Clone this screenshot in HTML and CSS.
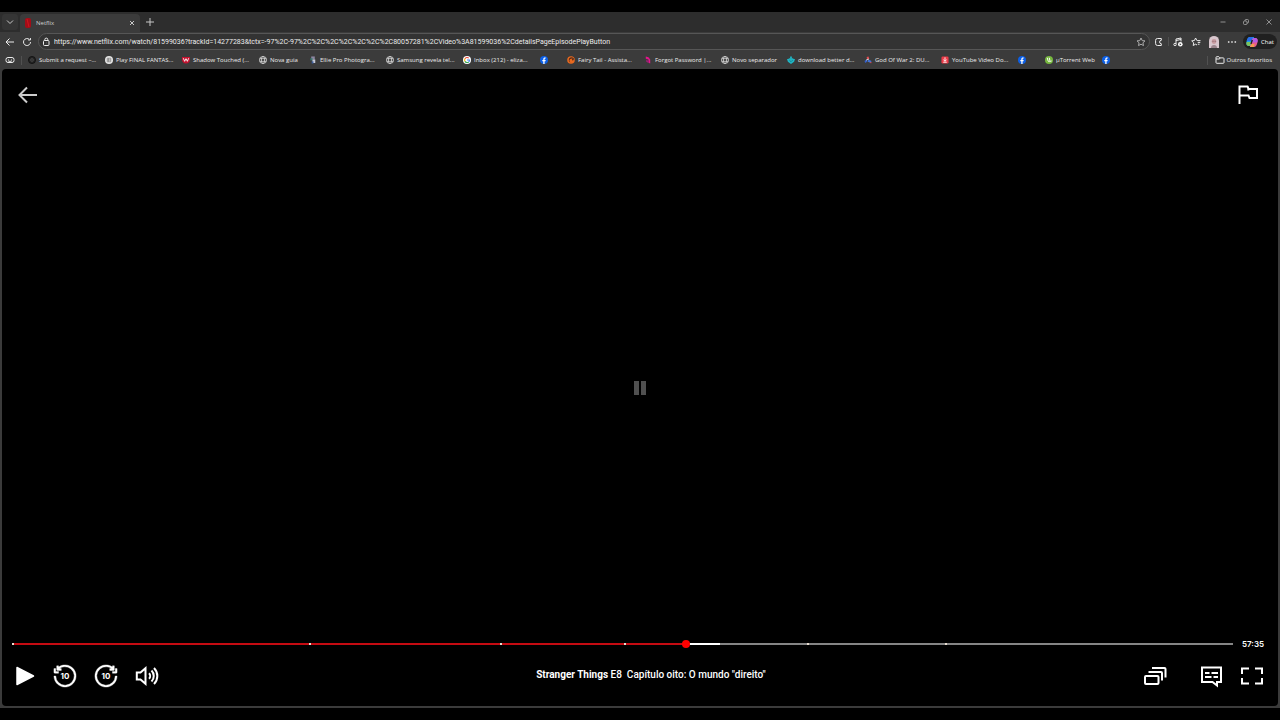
FILE: index.html
```html
<!DOCTYPE html>
<html lang="pt">

<head>
    <meta charset="UTF-8">
    <meta name="viewport" content="width=device-width, initial-scale=1.0">
    <title>Netflix</title>
    <link rel="stylesheet" href="styles.css">
</head>

<body>
    <svg class="sprite" aria-hidden="true">
        <symbol id="globe" viewBox="0 0 18 18">
            <g fill="none" stroke="#dcdcdc" stroke-width="1.7">
                <circle cx="9" cy="9" r="8" />
                <ellipse cx="9" cy="9" rx="3.6" ry="8" />
                <path d="M1.5 6h15M1.5 12h15" />
            </g>
        </symbol>
        <symbol id="facebook" viewBox="0 0 18 18">
            <circle cx="9" cy="9" r="9" fill="#0c5fe6" />
            <path d="M7.4 18v-6.4H5.2V8.8h2.2V7c0-2.4 1.4-3.7 3.5-3.7l2 .2v2.3h-1.1c-1.1 0-1.5.7-1.5 1.4v1.6h2.5l-.4 2.8h-2.1V18z" fill="#fff" />
        </symbol>
        <symbol id="skip" viewBox="-1 -1 26 26">
            <path d="M11 2A10 10 0 1 1 2 12H0a12 12 0 1 0 5-9.750V1H3v4a1 1 0 0 0 1 1h4V4H6a10 10 0 0 1 5-2zM2 4v3h3v2H1a1 1 0 0 1-1-1V4z" fill="#fff" stroke="#fff" stroke-width="0.4" />
        </symbol>
    </svg>

    <div class="browser">
        <header class="tab-strip">
            <button class="tab-menu" aria-label="Tab actions">
                <svg viewBox="0 0 8 8"><path d="M1 2.5l3 3 3-3" /></svg>
            </button>
            <div class="tab">
                <svg class="tab-icon" viewBox="0 0 6 10"><rect width="6" height="10" rx="2" fill="#a30d17" /><path d="M2 1l2 8" stroke="#cf1420" stroke-width="1" /></svg>
                <span class="tab-title">Netflix</span>
                <button class="tab-close" aria-label="Close tab">
                    <svg viewBox="0 0 8 8"><path d="M2 2l4 4M6 2L2 6" /></svg>
                </button>
            </div>
            <button class="tab-new" aria-label="New tab">
                <svg viewBox="0 0 8 8"><path d="M4 0v8M0 4h8" /></svg>
            </button>
            <div class="window-buttons">
                <button aria-label="Minimize"><svg viewBox="0 0 8 8"><path d="M1.5 4h5" /></svg></button>
                <button aria-label="Restore"><svg viewBox="0 0 8 8"><rect x="1.5" y="3" width="3.5" height="3.5" rx="1" /><path d="M3 3V2.500a1 1 0 0 1 1-1h1.500a1 1 0 0 1 1 1V4a1 1 0 0 1-1 1H5" /></svg></button>
                <button aria-label="Close"><svg viewBox="0 0 8 8"><path d="M1.5 1.5l5 5M6.5 1.5l-5 5" /></svg></button>
            </div>
        </header>

        <div class="toolbar">
            <button class="nav-btn" aria-label="Back">
                <svg viewBox="0 0 10 10"><path d="M9 5H1M4.5 1.5L1 5l3.5 3.5" /></svg>
            </button>
            <button class="nav-btn" aria-label="Refresh">
                <svg viewBox="0 0 10 10"><path d="M8.5 5a3.5 3.5 0 1 1-1.200-2.600M8.400 1v2H6.200" /></svg>
            </button>
            <div class="address">
                <svg viewBox="0 0 8 10"><rect x="1.5" y="3.5" width="5.5" height="5" rx="1" /><path d="M2.800 3.5V2.600a1.500 1.500 0 0 1 3 0v.9M4.200 5.800h.2" /></svg>
                <input class="url" type="text" aria-label="Address" value="https://www.netflix.com/watch/81599036?trackId=14277283&amp;tctx=-97%2C-97%2C%2C%2C%2C%2C%2C%2C80057281%2CVideo%3A81599036%2CdetailsPageEpisodePlayButton">
                <button class="favorite" aria-label="Add to favorites">
                    <svg viewBox="0 0 10 10"><path d="M5 1l1.200 2.600 2.800.3-2.100 1.900.6 2.800L5 7.200 2.500 8.600l.6-2.800L1 3.900l2.800-.3z" /></svg>
                </button>
            </div>
            <button class="tool" aria-label="Extensions">
                <svg viewBox="0 0 10 10"><path d="M3.500 1.500h3.800v1.800a1.700 1.700 0 1 0 0 3.400v1.800H3.500A1.900 1.900 0 0 1 1.600 6.600V3.400a1.900 1.900 0 0 1 1.900-1.900z" /></svg>
            </button>
            <span class="divider"></span>
            <button class="tool" aria-label="Media controls">
                <svg viewBox="0 0 10 10"><path d="M3 7V2l5-1v3.500M3 3.500l5-1" /><circle cx="2" cy="7.500" r="1.200" /><circle cx="7.300" cy="7.300" r="2.300" fill="#fff" stroke="none" /><path d="M6.700 6.200v2.200l1.700-1.100z" fill="#333" stroke="none" /></svg>
            </button>
            <button class="tool" aria-label="Favorites">
                <svg viewBox="0 0 10 10"><path d="M6.800 3.500h-.9L4.600 1 3.400 3.500l-2.700.4 2 1.900-.5 2.700 2.400-1.300 1.400.8M7 3.600h2.500M6.700 5.400h2.600M6.800 7.200h1.700" /></svg>
            </button>
            <button class="tool" aria-label="Profile">
                <svg class="avatar" viewBox="0 0 12 12"><path d="M1 12V4.500A5 4.500 0 0 1 11 4.500V12z" fill="#d8c6cd" /><circle cx="6" cy="5.500" r="2.400" fill="#c79a9f" /><path d="M3 12a3 3 0 0 1 6 0z" fill="#9a848c" /><path d="M4.700 5.300h.6M6.800 5.300h.6" stroke="#533b46" /></svg>
            </button>
            <button class="tool" aria-label="Settings and more">
                <svg class="dots" viewBox="0 0 10 10"><circle cx="1.700" cy="5" r="0.900" /><circle cx="5" cy="5" r="0.900" /><circle cx="8.300" cy="5" r="0.900" /></svg>
            </button>
            <button class="chat">
                <svg viewBox="0 0 12 12"><path d="M4 1h4L6 8C5.500 9.500 4.500 10 3 10 0 10 0 7 1 4 1.600 2 2.500 1 4 1z" fill="#1aa3ec" /><path d="M1 4c.6-2 1.500-3 3-3h3L5.500 5H.7z" fill="#2b6bea" /><path d="M.6 6h4.700L4 9.800C1 10.500-.2 8.500.6 6z" fill="#7ec35a" /><path d="M8 11H4l2-7c.5-1.500 1.500-2 3-2 3 0 3 3 2 6-.6 2-1.500 3-3 3z" fill="#e85a8b" /><path d="M7 2h2c3 0 3 2.500 2.300 4.500H5.500z" fill="#b45ae2" /><path d="M5 8h3.500L8 11H4z" fill="#f39a50" /><path d="M6.300 4L5 8" stroke="#202020" stroke-width="1.300" /></svg>
                <span>Chat</span>
            </button>
        </div>

        <nav class="bookmarks" aria-label="Favorites bar">
            <button class="essentials" aria-label="Browser essentials">
                <svg viewBox="0 0 10 8"><rect x="1" y="1.500" width="8" height="5" rx="2" /><path d="M3 4h1M6 4h1M3.500 5.300h3" /></svg>
            </button>
            <span class="divider"></span>
            <a class="bookmark" href="#"><svg viewBox="0 0 18 18"><circle cx="9" cy="9" r="8" fill="#242424" stroke="#111" stroke-width="2" /><circle cx="9" cy="9" r="3" fill="none" stroke="#555" stroke-width="1.500" /></svg><span>Submit a request –...</span></a>
            <a class="bookmark" href="#"><svg viewBox="0 0 18 18"><circle cx="9" cy="9" r="9" fill="#e6e6e6" /><path d="M5 5h8v8H5zM5 9h8M8 5v8" fill="none" stroke="#777" stroke-width="1.500" /></svg><span>Play FINAL FANTAS...</span></a>
            <a class="bookmark" href="#"><svg viewBox="0 0 18 18"><path d="M0 2h18v7c0 4-4 8-9 8s-9-4-9-8z" fill="#c3122f" /><path d="M3 5l3 7 3-6 3 6 3-7" fill="none" stroke="#fff" stroke-width="2" /></svg><span>Shadow Touched (...</span></a>
            <a class="bookmark short" href="#"><svg><use href="#globe" /></svg><span>Nova guia</span></a>
            <a class="bookmark" href="#"><svg viewBox="0 0 18 18"><path d="M5 1h8v7H5z" fill="#8c86a0" /><path d="M3 5h5v5H3z" fill="#3a7770" /><path d="M8 8h6v8H7z" fill="#c7cbd9" /><path d="M6 12h4v5H6z" fill="#3c5c9b" /></svg><span>Ellie Pro Photogra...</span></a>
            <a class="bookmark" href="#"><svg><use href="#globe" /></svg><span>Samsung revela tel...</span></a>
            <a class="bookmark" href="#"><svg viewBox="0 0 18 18"><circle cx="9" cy="9" r="9" fill="#fff" /><g fill="none" stroke-width="2.500"><path d="M4.500 6A5.500 5.500 0 0 1 13 5" stroke="#e94335" /><path d="M4.500 6a5.500 5.500 0 0 0 0 6" stroke="#f9bb05" /><path d="M4.500 12a5.500 5.500 0 0 0 8.500 1" stroke="#34a853" /><path d="M13 13a5 5 0 0 0 1.500-4H9" stroke="#4285f4" /></g></svg><span>Inbox (212) - eliza...</span></a>
            <a class="bookmark icon-only" href="#" aria-label="Facebook"><svg><use href="#facebook" /></svg></a>
            <a class="bookmark" href="#"><svg viewBox="0 0 18 18"><circle cx="9" cy="9" r="8.500" fill="#e96a20" /><path d="M16 9a6 6 0 1 0-6 6 4.500 4.500 0 0 1 0-9c3 0 5 1 6 3z" fill="#5a2e18" /><circle cx="10.500" cy="10" r="4" fill="#e96a20" /><circle cx="13" cy="8" r="2" fill="#5a2e18" /></svg><span>Fairy Tail - Assista...</span></a>
            <a class="bookmark" href="#"><svg viewBox="0 0 18 18"><path d="M4 1l6 2 4 5v9l-4-2V8L4 6z" fill="#e3158b" /><path d="M5 8l5 3v5l-5-3z" fill="#9c1f75" /></svg><span>Forgot Password |...</span></a>
            <a class="bookmark medium" href="#"><svg><use href="#globe" /></svg><span>Novo separador</span></a>
            <a class="bookmark" href="#"><svg viewBox="0 0 18 18"><path d="M7 1h4v5l3-2v3h4l-2 6-7 5-7-5-2-6h4V4l3 2z" fill="#20b5c4" /><path d="M5 9l4 4 4-4" fill="none" stroke="#137482" stroke-width="1.500" /></svg><span>download better d...</span></a>
            <a class="bookmark" href="#"><svg viewBox="0 0 18 18"><path d="M6 2l4-1 2 5-5 2z" fill="#e24c51" /><path d="M1 11l5-3 2 4-5 4z" fill="#3660c9" /><path d="M10 8l7 3-2 4-7-2z" fill="#4173d2" /><path d="M5 9l6-2" stroke="#eee" stroke-width="2" /><path d="M13 14h4v2h-4z" fill="#d54757" /></svg><span>God Of War 2: DU...</span></a>
            <a class="bookmark" href="#"><svg viewBox="0 0 18 18"><rect x="1" y="1" width="16" height="16" rx="3" fill="#ec3b48" /><path d="M9 3v8M5.500 8L9 12l3.500-4M5 14h8" fill="none" stroke="#fff" stroke-width="2" /></svg><span>YouTube Video Do...</span></a>
            <a class="bookmark icon-only" href="#" aria-label="Facebook"><svg><use href="#facebook" /></svg></a>
            <a class="bookmark compact" href="#"><svg viewBox="0 0 18 18"><circle cx="9" cy="9" r="9" fill="#77b83f" /><path d="M5 4l2 7c1 3 5 2 4-1L9.500 4M11 11c1 2 3 1 4 0" fill="none" stroke="#fff" stroke-width="2.200" /></svg><span>µTorrent Web</span></a>
            <a class="bookmark icon-only" href="#" aria-label="Facebook"><svg><use href="#facebook" /></svg></a>
            <span class="divider push"></span>
            <a class="folder" href="#"><svg viewBox="0 0 10 8"><path d="M1 2V1.500a.8.8 0 0 1 .8-.8h2l1.200 1.200h3.200a.8.8 0 0 1 .8.8v3.800a.8.8 0 0 1-.8.8H1.800a.8.8 0 0 1-.8-.8zM1 3h3.500L5 2" /></svg><span>Outros favoritos</span></a>
        </nav>

        <main class="player">
            <div class="player-top">
                <button aria-label="Voltar">
                    <svg class="back-icon" viewBox="0 0 24 24"><path d="M21 12H5M11 4.500L3.500 12l7.500 7.500" /></svg>
                </button>
                <button aria-label="Relatar um problema">
                    <svg viewBox="0 0 24 24"><path d="M3.500 21V3.500h8l1 2.500H21v9h-7.500l-1-2.500h-9M12 4l.5 3.500" /></svg>
                </button>
            </div>

            <div class="paused">
                <svg viewBox="0 0 14 14"><path d="M1 0h5v14H1zM8 0h5v14H8z" /></svg>
            </div>

            <div class="player-bottom">
                <div class="timeline">
                    <div class="track">
                        <input class="seek" type="range" min="0" max="1000" value="552" aria-label="Progresso">
                        <span class="marker" style="left: 0%"></span>
                        <span class="marker" style="left: 24.3%"></span>
                        <span class="marker" style="left: 40%"></span>
                        <span class="marker" style="left: 50.1%"></span>
                        <span class="marker" style="left: 65.1%"></span>
                        <span class="marker" style="left: 76.4%"></span>
                    </div>
                    <span class="time">57:35</span>
                </div>

                <div class="controls">
                    <div class="group">
                        <button aria-label="Reproduzir">
                            <svg viewBox="0 0 24 24"><path d="M5 3.500v17L21.500 12z" fill="#fff" stroke-width="1.500" stroke-linejoin="round" /></svg>
                        </button>
                        <button aria-label="Recuar 10 segundos">
                            <svg viewBox="0 0 24 24"><use href="#skip" width="24" height="24" /><text x="12" y="15">10</text></svg>
                        </button>
                        <button aria-label="Avançar 10 segundos">
                            <svg viewBox="0 0 24 24"><g transform="translate(24 0) scale(-1 1)"><use href="#skip" width="24" height="24" /></g><text x="12" y="15">10</text></svg>
                        </button>
                        <button aria-label="Volume">
                            <svg viewBox="0 0 24 24"><path d="M1.800 8.500H5.500L10.500 4.200v15.600L5.500 15.500H1.800z" /><path d="M14 9.200a4 4 0 0 1 0 5.600M16.500 6.500a7.800 7.800 0 0 1 0 11M19 4a11.300 11.300 0 0 1 0 16" /></svg>
                        </button>
                    </div>
                    <p class="title"><b>Stranger Things</b> E8&nbsp; Capítulo oito: O mundo "direito"</p>
                    <div class="group">
                        <button class="episodes" aria-label="Episódios">
                            <svg viewBox="0 0 24 24"><rect x="2" y="12" width="13.500" height="8" rx="1" /><path d="M5.500 8H18a1 1 0 0 1 1 1v7.500M9 4h12.500a1 1 0 0 1 1 1v8.500" /></svg>
                        </button>
                        <button aria-label="Áudio e legendas">
                            <svg viewBox="0 0 24 24"><path d="M3 3.500h19v14.500h-4v3.500L13.500 18H3z" /><path d="M6 9h4.500M12.500 9H19M6 13h6.500M14.500 13H19" /></svg>
                        </button>
                        <button aria-label="Tela cheia">
                            <svg viewBox="0 0 24 24"><path d="M2 10V4.500h7M15 4.500h7V10M22 14v5.500h-7M9 19.500H2V14" /></svg>
                        </button>
                    </div>
                </div>
            </div>
        </main>
    </div>
</body>

</html>
```

FILE: styles.css
```css
* {
    box-sizing: border-box;
}

body {
    margin: 0;
    padding: 12px 0;
    height: 100vh;
    display: flex;
    background-color: #000;
    color: #ececec;
    font-family: "Open Sans", "Noto Sans", sans-serif;
    font-size: 6px;
    line-height: 10px;
}

button {
    display: flex;
    align-items: center;
    justify-content: center;
    flex: none;
    padding: 0;
    border: none;
    background: none;
    color: inherit;
    font: inherit;
    cursor: pointer;
}

a {
    color: inherit;
    text-decoration: none;
}

svg {
    display: block;
    flex: none;
    fill: none;
    stroke: currentColor;
}

.sprite {
    position: absolute;
    width: 0;
    height: 0;
}

.browser {
    flex: 1;
    min-width: 0;
    display: flex;
    flex-direction: column;
    padding: 0 2px 2px;
    background-color: #3b3b3b;
}

/* tabs */
.tab-strip {
    display: flex;
    align-items: center;
    height: 20px;
    margin: 0 -2px;
    padding-left: 2px;
    background-color: #2d2d2d;
}

.tab-menu {
    width: 16px;
    height: 16px;
    border-radius: 3px;
    background-color: #353535;
}

.tab-strip svg {
    width: 8px;
    height: 8px;
    stroke: #c8c8c8;
}

.tab {
    display: flex;
    align-items: center;
    align-self: flex-end;
    gap: 5px;
    width: 120px;
    height: 18px;
    margin-left: 2px;
    padding: 0 4px 0 5px;
    border-radius: 4px 4px 0 0;
    background-color: #3b3b3b;
}

.tab .tab-icon {
    width: 6px;
    height: 10px;
    stroke: none;
}

.tab-title {
    flex: 1;
    color: #d0d0d0;
}

.tab-new {
    width: 20px;
}

.window-buttons {
    display: flex;
    margin-left: auto;
}

.window-buttons button {
    width: 23px;
    height: 20px;
}

.window-buttons svg {
    stroke: #a8a8a8;
    stroke-width: 0.8;
}

/* address bar */
.toolbar {
    display: flex;
    align-items: center;
    height: 19px;
    padding-right: 1px;
}

.toolbar svg {
    width: 10px;
    height: 10px;
}

.nav-btn {
    width: 18px;
    height: 18px;
}

.nav-btn:first-child {
    width: 16px;
}

.address {
    display: flex;
    align-items: center;
    flex: 1;
    height: 17px;
    margin-left: 2px;
    padding: 0 3px 0 2px;
    border: 1px solid #565656;
    border-radius: 9px;
    background-color: #333;
}

.url {
    flex: 1;
    min-width: 0;
    margin-left: 3px;
    padding: 0;
    border: none;
    outline: none;
    background: none;
    color: #ececec;
    font-family: Roboto, sans-serif;
    font-size: 7px;
}

.favorite {
    color: #aaa;
}

.tool {
    width: 18px;
    height: 18px;
}

.toolbar .avatar {
    width: 12px;
    height: 12px;
    stroke: none;
}

.toolbar .dots {
    fill: #ccc;
    stroke: none;
}

.divider {
    width: 1px;
    height: 9px;
    background-color: #515151;
}

.chat {
    gap: 3px;
    width: 34px;
    height: 15px;
    margin-left: 2px;
    border-radius: 8px;
    background-color: #202020;
    color: #fff;
}

.toolbar .chat svg {
    width: 12px;
    height: 12px;
    stroke: none;
}

/* favorites bar */
.bookmarks {
    display: flex;
    align-items: center;
    height: 18px;
    white-space: nowrap;
}

.essentials {
    width: 16px;
    margin-right: 3px;
}

.essentials svg,
.folder svg {
    width: 10px;
    height: 8px;
}

.essentials + .divider {
    margin-right: 6px;
}

.bookmark {
    display: flex;
    align-items: center;
    gap: 3px;
    width: 77px;
    flex: none;
}

.bookmark svg {
    width: 8px;
    height: 8px;
    stroke: none;
}

.bookmark.short {
    width: 50px;
}

.bookmark.compact {
    width: 57px;
}

.bookmark.medium {
    width: 66px;
}

.bookmark.icon-only {
    width: 27px;
}

.push {
    margin-left: auto;
}

.folder {
    display: flex;
    align-items: center;
    gap: 2px;
    margin: 0 6px 0 7px;
}

/* player */
.player {
    position: relative;
    flex: 1;
    display: flex;
    flex-direction: column;
    justify-content: space-between;
    border-radius: 4px;
    background-color: #000;
    color: #fff;
    font-family: Inter, sans-serif;
}

.player button {
    width: 24px;
    height: 24px;
}

.player button svg {
    width: 24px;
    height: 24px;
    stroke-width: 2;
}

.player-top {
    display: flex;
    justify-content: space-between;
    padding: 14px 18px 0 14px;
}

.player-top .back-icon {
    color: #ccc;
}

.paused {
    position: absolute;
    inset: 0;
    display: flex;
    align-items: center;
    justify-content: center;
    pointer-events: none;
}

.paused svg {
    width: 14px;
    height: 14px;
    fill: #505050;
    stroke: none;
}

.player-bottom {
    padding: 0 14px 18px 10px;
}

.timeline {
    display: flex;
    align-items: center;
    gap: 9px;
}

.track {
    position: relative;
    flex: 1;
    height: 10px;
}

.seek {
    display: block;
    width: 100%;
    height: 10px;
    margin: 0;
    appearance: none;
    background: linear-gradient(to right, #c50b12 55%, #fff 55%, #fff 58%, #858585 58%) center / 100% 2px no-repeat;
}

.seek::-webkit-slider-thumb {
    appearance: none;
    width: 8px;
    height: 8px;
    border-radius: 50%;
    background-color: #f00;
}

.marker {
    position: absolute;
    top: 4px;
    width: 2px;
    height: 2px;
    background-color: #e8dcd0;
}

.time {
    font-size: 8px;
    font-weight: 600;
}

.controls {
    display: flex;
    align-items: center;
    justify-content: space-between;
    margin-top: 15px;
}

.group {
    display: flex;
    gap: 17px;
}

.group text {
    fill: #fff;
    stroke: none;
    font-size: 8px;
    font-weight: 700;
    text-anchor: middle;
}

.episodes {
    margin-right: 15px;
}

.title {
    margin: 0;
    padding-bottom: 3px;
    font-family: Roboto, sans-serif;
    font-size: 10px;
    font-weight: 500;
    line-height: 14px;
}

.title b {
    font-weight: 700;
}
```
